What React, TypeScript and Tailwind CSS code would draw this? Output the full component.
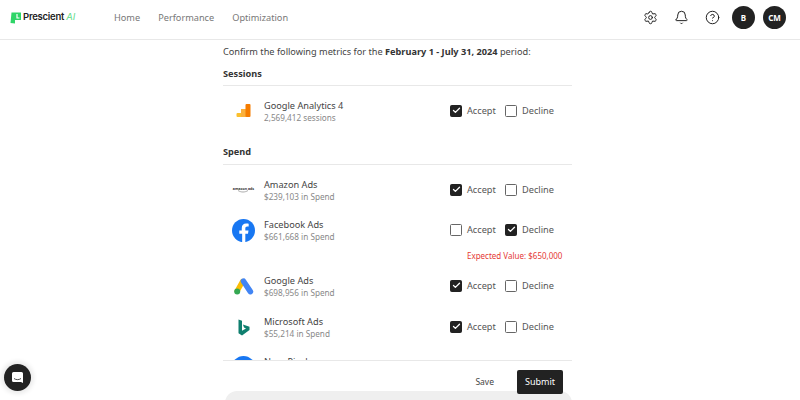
import { Settings, Bell, CircleHelp, Check } from 'lucide-react'
import type { ReactNode } from 'react'

function Box({ checked }: { checked: boolean }) {
  if (checked) {
    return (
      <div className="w-[10px] h-[10px] box-content border border-[#222] rounded-[1.5px] bg-[#222] flex items-center justify-center">
        <Check className="w-[9px] h-[9px] text-white" strokeWidth={3.5} />
      </div>
    )
  }
  return <div className="w-[10px] h-[10px] box-content border border-[#666] rounded-[1.5px] bg-white" />
}

function GaIcon() {
  return (
    <svg width="16" height="16" viewBox="0 0 16 16">
      <rect x="0.5" y="10" width="5" height="4" rx="1" fill="#fbc02d" />
      <rect x="5" y="6" width="5" height="8" fill="#fbb03b" />
      <rect x="9.5" y="1" width="5" height="13" rx="1" fill="#f57c00" />
    </svg>
  )
}

function AmazonIcon() {
  return (
    <div className="flex flex-col items-center leading-none">
      <span className="text-[3.6px] font-bold text-[#333]">amazon ads</span>
      <svg width="12" height="3" viewBox="0 0 12 3" className="-mt-[1px]">
        <path d="M1 .5C4 2.5 8 2.5 11 .5" stroke="#888" strokeWidth="0.7" fill="none" />
      </svg>
    </div>
  )
}

function FacebookIcon() {
  return (
    <svg width="23" height="23" viewBox="0 0 24 24">
      <circle cx="12" cy="12" r="12" fill="#1877f2" />
      <path
        d="M16.7 15.5l.5-3.5h-3.3V9.8c0-1 .5-1.9 2-1.9h1.5V5c0 0-1.4-.2-2.7-.2-2.7 0-4.5 1.7-4.5 4.6V12H7.6v3.5h3V24h3.3v-8.5h2.8z"
        fill="#fff"
      />
    </svg>
  )
}

function GoogleAdsIcon() {
  return (
    <svg width="20" height="17" viewBox="0 0 20 17">
      <path d="M8.5 3.5 3.2 13" stroke="#fbbc04" strokeWidth="5.2" strokeLinecap="round" />
      <path d="M9.5 3.2 16.4 13.6" stroke="#4285f4" strokeWidth="5.6" strokeLinecap="round" />
      <circle cx="3.2" cy="13.6" r="3" fill="#34a853" />
    </svg>
  )
}

function BingIcon() {
  return (
    <svg width="12" height="17" viewBox="0 0 12 17">
      <path
        d="M0.5 0.5 4 1.7V11.8L8 9.6 6 8.6 4.9 5.5 11.5 7.8V11L4 16.5 0.5 14.2Z"
        fill="#0f7f6f"
      />
    </svg>
  )
}

function Metric({
  icon,
  name,
  sub,
  accepted,
}: {
  icon: ReactNode
  name: string
  sub: string
  accepted: boolean
}) {
  return (
    <div className="h-[40px] flex items-center shrink-0">
      <div className="w-[41px] flex justify-center">{icon}</div>
      <div className="w-[186px]">
        <div className="text-[9.2px] leading-[13px] text-[#444]">{name}</div>
        <div className="text-[8.2px] leading-[12px] text-[#888]">{sub}</div>
      </div>
      <div className="flex items-center gap-[5px] w-[55px]">
        <Box checked={accepted} />
        <span className="text-[9.2px] text-[#555]">Accept</span>
      </div>
      <div className="flex items-center gap-[5px]">
        <Box checked={!accepted} />
        <span className="text-[9.2px] text-[#555]">Decline</span>
      </div>
    </div>
  )
}

export default function App() {
  return (
    <div className="relative w-[800px] h-[400px] overflow-hidden bg-white flex flex-col font-['Noto_Sans',sans-serif]">
      <header className="h-[40px] shrink-0 border-b border-[#e8e8e8] flex items-center pb-[4px] pl-[10px] pr-[14px]">
        <div className="flex items-center w-[104px]">
          <svg width="12" height="13" viewBox="0 0 12 13">
            <path d="M1.5 1.5H11V9H5V12.5L0.5 12Z" fill="#2fd568" />
            <path d="M7 3V7H9.5" stroke="#fff" strokeWidth="1.2" fill="none" />
          </svg>
          <span className="ml-[1px] text-[9.5px] font-semibold tracking-tight text-[#222] font-['Inter',sans-serif]">
            Prescient <span className="font-normal italic text-[#5fdc8b]">AI</span>
          </span>
        </div>
        <nav className="flex gap-[18px] text-[9.2px] text-[#777]">
          <span>Home</span>
          <span>Performance</span>
          <span>Optimization</span>
        </nav>
        <div className="ml-auto flex items-center">
          <Settings className="w-[15px] h-[15px] text-[#222]" strokeWidth={1.6} />
          <Bell className="ml-[16px] w-[15px] h-[15px] text-[#222]" strokeWidth={1.6} />
          <CircleHelp className="ml-[16px] w-[15px] h-[15px] text-[#222]" strokeWidth={1.6} />
          <div className="ml-[12px] w-[23px] h-[23px] rounded-full bg-[#222] text-white text-[8px] font-bold flex items-center justify-center">
            B
          </div>
          <div className="ml-[8px] w-[23px] h-[23px] rounded-full bg-[#222] text-white text-[8px] font-bold flex items-center justify-center">
            CM
          </div>
        </div>
      </header>

      <main className="flex-1 min-h-0 w-[349px] ml-[223px] flex flex-col overflow-hidden">
        <p className="mt-[4px] text-[9.2px] leading-[15px] text-[#444] shrink-0">
          Confirm the following metrics for the{' '}
          <b className="font-bold text-[#333]">February 1 - July 31, 2024</b> period:
        </p>
        <h3 className="mt-[8px] text-[9.2px] leading-[14px] font-bold text-[#333] border-b border-[#e8e8e8] pb-[4px] shrink-0">
          Sessions
        </h3>
        <div className="mt-[5px] shrink-0">
          <Metric icon={<GaIcon />} name="Google Analytics 4" sub="2,569,412 sessions" accepted />
        </div>
        <h3 className="mt-[14px] text-[9.2px] leading-[14px] font-bold text-[#333] border-b border-[#e8e8e8] pb-[5px] shrink-0">
          Spend
        </h3>
        <div className="mt-[5px] shrink-0">
          <Metric icon={<AmazonIcon />} name="Amazon Ads" sub="$239,103 in Spend" accepted />
          <Metric icon={<FacebookIcon />} name="Facebook Ads" sub="$661,668 in Spend" accepted={false} />
          <div className="h-[16px] pl-[244px] text-[8px] leading-[12px] text-[#e53935] whitespace-nowrap">
            Expected Value: $650,000
          </div>
          <Metric icon={<GoogleAdsIcon />} name="Google Ads" sub="$698,956 in Spend" accepted />
          <div className="h-px" />
          <Metric icon={<BingIcon />} name="Microsoft Ads" sub="$55,214 in Spend" accepted />
          <Metric icon={<div className="w-[23px] h-[23px] rounded-full bg-[#1877f2]" />} name="NeonPixel" sub={'\u00a0'} accepted />
        </div>
      </main>

      <footer className="absolute left-[223px] top-[360px] w-[349px] h-[40px] bg-white border-t border-[#e8e8e8] pt-[9px] pr-[9px] flex justify-end gap-[23px]">
        <span className="h-[24px] leading-[24px] text-[8.5px] text-[#444]">Save</span>
        <button className="relative z-10 w-[46px] h-[24px] rounded-[2px] bg-[#222] text-white text-[9px]">
          Submit
        </button>
      </footer>
      <div className="absolute left-[225px] top-[391px] w-[347px] h-[20px] rounded-t-[12px] bg-[#efefef]" />

      <div className="absolute left-[4px] top-[364px] w-[27px] h-[27px] rounded-full bg-[#222] flex items-center justify-center shadow-[0_0_4px_3px_rgba(0,0,0,0.08)]">
        <svg width="13" height="13" viewBox="0 0 13 13">
          <path d="M1 2.5A1.5 1.5 0 0 1 2.5 1h8A1.5 1.5 0 0 1 12 2.5V12l-2-1H2.5A1.5 1.5 0 0 1 1 9.5Z" fill="#fff" />
          <path d="M3 7.5C5 9 8 9 10 7.5" stroke="#222" strokeWidth="0.8" fill="none" />
        </svg>
      </div>
    </div>
  )
}
